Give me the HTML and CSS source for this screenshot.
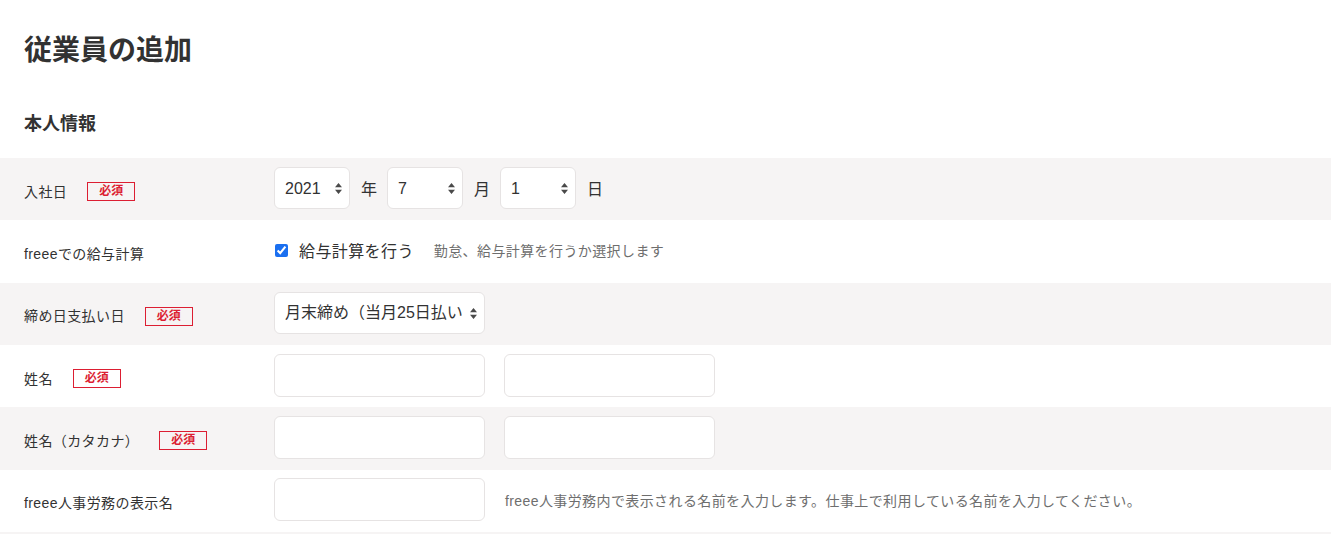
FILE: index.html
```html
<!DOCTYPE html>
<html lang="ja">
<head>
<meta charset="utf-8">
<title>従業員の追加</title>
<link rel="stylesheet" href="styles.css">
</head>
<body>
<main class="page">
  <h1 class="title">従業員の追加</h1>
  <h2 class="section">本人情報</h2>
  <div class="form">
    <div class="row alt">
      <div class="label">入社日<span class="req">必須</span></div>
      <div class="control">
        <span class="sel sel-s"><select><option>2021</option></select><svg class="arrow" viewBox="0 0 7 11"><path d="M3.5 0L7 4.3H0z M3.5 11L0 6.7H7z"/></svg></span>
        <span class="unit">年</span>
        <span class="sel sel-s"><select><option>7</option></select><svg class="arrow" viewBox="0 0 7 11"><path d="M3.5 0L7 4.3H0z M3.5 11L0 6.7H7z"/></svg></span>
        <span class="unit">月</span>
        <span class="sel sel-s"><select><option>1</option></select><svg class="arrow" viewBox="0 0 7 11"><path d="M3.5 0L7 4.3H0z M3.5 11L0 6.7H7z"/></svg></span>
        <span class="unit">日</span>
      </div>
    </div>
    <div class="row">
      <div class="label">freeeでの給与計算</div>
      <div class="control">
        <label class="check"><input type="checkbox" checked><span>給与計算を行う</span></label>
        <span class="help">勤怠、給与計算を行うか選択します</span>
      </div>
    </div>
    <div class="row alt">
      <div class="label">締め日支払い日<span class="req">必須</span></div>
      <div class="control">
        <span class="sel sel-l"><select><option>月末締め（当月25日払い）</option></select><svg class="arrow" viewBox="0 0 7 11"><path d="M3.5 0L7 4.3H0z M3.5 11L0 6.7H7z"/></svg></span>
      </div>
    </div>
    <div class="row">
      <div class="label">姓名<span class="req">必須</span></div>
      <div class="control gap">
        <input class="text" type="text">
        <input class="text" type="text">
      </div>
    </div>
    <div class="row alt">
      <div class="label">姓名（カタカナ）<span class="req">必須</span></div>
      <div class="control gap">
        <input class="text" type="text">
        <input class="text" type="text">
      </div>
    </div>
    <div class="row">
      <div class="label">freee人事労務の表示名</div>
      <div class="control gap">
        <input class="text" type="text">
        <span class="help">freee人事労務内で表示される名前を入力します。仕事上で利用している名前を入力してください。</span>
      </div>
    </div>
    <div class="row-edge"></div>
  </div>
</main>
</body>
</html>
```

FILE: styles.css
```css
html, body {
  margin: 0;
  padding: 0;
  background: #ffffff;
}

body {
  font-family: "Liberation Sans", "Noto Sans CJK JP", sans-serif;
  color: #323232;
  font-size: 14px;
}

.title {
  margin: 0;
  padding: 31px 24px 0;
  font-size: 28px;
  line-height: 40px;
  font-weight: 700;
  color: #323232;
}

.section {
  margin: 0;
  padding: 40px 24px 0;
  font-size: 18px;
  line-height: 26px;
  font-weight: 700;
  color: #323232;
  height: 87px;
  box-sizing: border-box;
}

.row {
  display: flex;
  align-items: center;
  height: 62.33px;
  box-sizing: border-box;
  padding: 0 24px 2px;
  background: #ffffff;
}

.row.alt {
  background: #f6f4f4;
}

.row-edge {
  height: 2px;
  background: #f6f4f4;
}

.label {
  width: 250px;
  flex: none;
  display: flex;
  align-items: center;
  padding-top: 7px;
  font-size: 14px;
  line-height: 20px;
  letter-spacing: 0.4px;
  color: #323232;
}

.req {
  display: inline-block;
  margin-left: 20px;
  width: 48px;
  height: 19px;
  box-sizing: border-box;
  border: 1px solid #dc1e32;
  color: #dc1e32;
  font-size: 12px;
  font-weight: 700;
  line-height: 17px;
  letter-spacing: 0;
  text-align: center;
}

.control {
  display: flex;
  align-items: center;
}

.control.gap {
  gap: 19px;
}

.sel {
  position: relative;
  display: inline-block;
  height: 42px;
}

.sel select {
  appearance: none;
  -webkit-appearance: none;
  height: 42px;
  box-sizing: border-box;
  border: 1px solid #e6e3e3;
  border-radius: 6px;
  background: #ffffff;
  font-family: "Liberation Sans", "Noto Sans CJK JP", sans-serif;
  font-size: 16px;
  color: #323232;
  padding: 0 22px 0 10px;
  outline: none;
}

.sel-s select {
  width: 76px;
}

.sel-l select {
  width: 211px;
}

.sel .arrow {
  position: absolute;
  right: 8px;
  top: 16px;
  width: 7px;
  height: 11px;
  fill: #4a4a4a;
  pointer-events: none;
}

.unit {
  font-size: 16px;
  margin: 0 10px 0 11px;
  color: #323232;
}

.check {
  display: flex;
  align-items: center;
  font-size: 16px;
  letter-spacing: 0.4px;
  color: #323232;
}

.check input {
  width: 13px;
  height: 13px;
  margin: 0 11px 0 1px;
  accent-color: #1a6ff0;
}

.help {
  font-size: 14px;
  letter-spacing: 0.4px;
  color: #6e6e6e;
  margin-left: 20px;
}

.control.gap .help {
  margin-left: 1px;
}

.text {
  width: 211px;
  height: 43px;
  box-sizing: border-box;
  border: 1px solid #e6e3e3;
  border-radius: 6px;
  background: #ffffff;
  outline: none;
  padding: 0 10px;
  font-size: 16px;
}
```
